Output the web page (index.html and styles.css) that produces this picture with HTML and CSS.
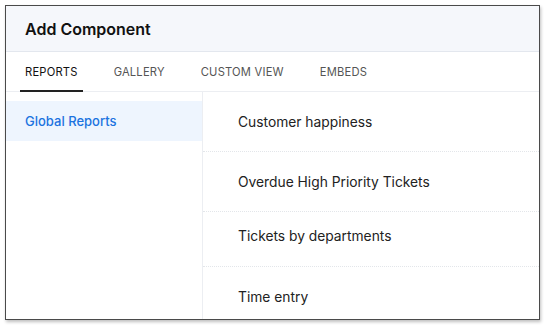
FILE: index.html
```html
<!DOCTYPE html>
<html>
<head>
    <title>Add Component</title>
    <link rel="stylesheet" href="styles.css">
</head>
<body>
    <div class="dialog">
        <div class="header">
            <h1>Add Component</h1>
        </div>

        <div class="tabs">
            <a class="tab active">REPORTS</a>
            <a class="tab">GALLERY</a>
            <a class="tab">CUSTOM VIEW</a>
            <a class="tab">EMBEDS</a>
        </div>

        <div class="content">
            <div class="sidebar">
                <div class="side-item active">Global Reports</div>
            </div>
            <ul class="list">
                <li>Customer happiness</li>
                <li>Overdue High Priority Tickets</li>
                <li class="short">Tickets by departments</li>
                <li>Time entry</li>
            </ul>
        </div>
    </div>
</body>
</html>
```

FILE: styles.css
```css
body {
    font-family: Inter, "Open Sans", sans-serif;
    margin: 0;
    padding: 5px;
    background: #fff;
}
.dialog {
    width: 533px;
    height: 313px;
    border: 1px solid #4a4a4a;
    box-shadow: 1px 2px 3px rgba(0, 0, 0, 0.25);
    overflow: hidden;
    display: flex;
    flex-direction: column;
    background: #fff;
}
.header {
    flex-shrink: 0;
    background-color: #f5f7fb;
    height: 45px;
    border-bottom: 1px solid #e3e7ee;
    display: flex;
    align-items: center;
    padding-left: 19px;
}
.header h1 {
    margin: 0;
    font-size: 16px;
    font-weight: 600;
    color: #111;
}
.tabs {
    flex-shrink: 0;
    display: flex;
    height: 39px;
    border-bottom: 1px solid #eceef2;
    padding-left: 14px;
}
.tab {
    font-size: 11.2px;
    letter-spacing: 0.2px;
    color: #555;
    padding: 0 5px;
    margin-right: 26px;
    display: flex;
    align-items: center;
    border-bottom: 2px solid transparent;
    margin-bottom: -1px;
    padding-top: 1px;
}
.tab.active {
    color: #111;
    border-bottom-color: #222;
}
.content {
    flex: 1;
    display: flex;
    overflow: hidden;
}
.sidebar {
    width: 196px;
    border-right: 1px solid #eceef2;
    padding-top: 9px;
}
.side-item {
    height: 40px;
    display: flex;
    align-items: center;
    padding-left: 19px;
    font-size: 13px;
    font-weight: 500;
}
.side-item.active {
    background-color: #eef5fe;
    color: #1c73e0;
}
.list {
    flex: 1;
    margin: 0;
    padding: 0;
    list-style: none;
}
.list li {
    height: 59px;
    display: flex;
    align-items: center;
    padding-left: 35px;
    font-size: 13.8px;
    color: #222;
    border-bottom: 1px dotted #e3e6ea;
}
.list li.short {
    height: 48px;
    padding-bottom: 6px;
}
```
